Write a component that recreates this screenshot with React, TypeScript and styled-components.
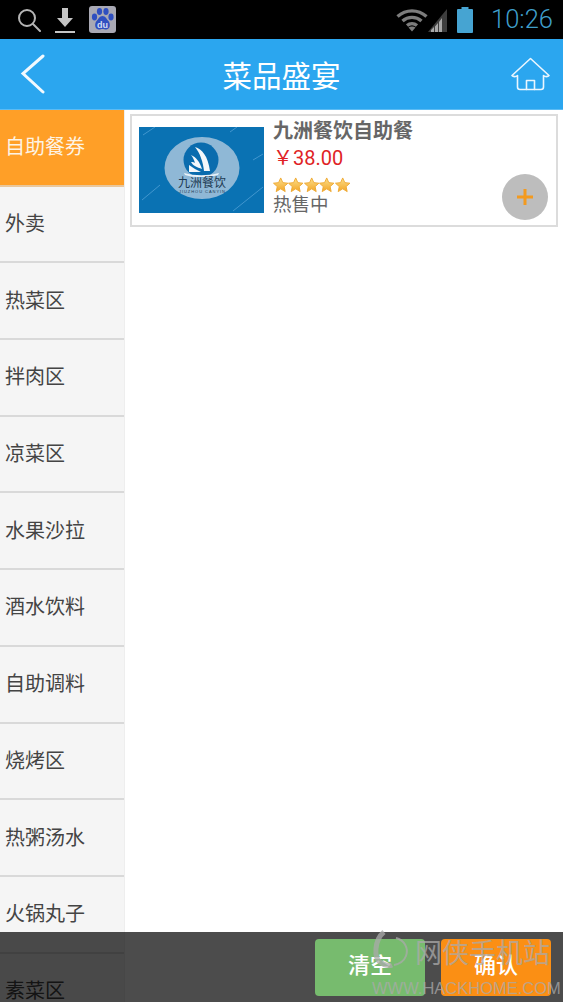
import React from 'react';
import styled, { createGlobalStyle } from 'styled-components';

const CJK = `"Roboto", "Noto Sans CJK SC", sans-serif`;

const categories = ['自助餐券', '外卖', '热菜区', '拌肉区', '凉菜区', '水果沙拉', '酒水饮料', '自助调料', '烧烤区', '热粥汤水', '火锅丸子', '素菜区'];

const Global = createGlobalStyle`
  html, body { margin: 0; padding: 0; background: #fff; }
  * { box-sizing: border-box; }
`;

const Screen = styled.div`
  position: relative;
  width: 563px;
  height: 1002px;
  overflow: hidden;
  display: flex;
  flex-direction: column;
  font-family: ${CJK};
  background: #fff;
`;

const StatusBar = styled.div`
  flex: 0 0 39px;
  background: #000;
  display: flex;
  align-items: center;
  padding: 0 10px 0 17px;
`;
const StatusLeft = styled.div`
  display: flex;
  align-items: center;
  gap: 14px;
`;
const StatusRight = styled.div`
  margin-left: auto;
  display: flex;
  align-items: center;
`;
const Clock = styled.span`
  font-size: 25.5px;
  font-weight: 300;
  color: #3f9fcb;
  margin-left: 18px;
  line-height: 39px;
`;
const BatterySlot = styled.span`
  display: flex;
  margin-left: 10px;
`;

const Header = styled.div`
  flex: 0 0 71px;
  background: #2ba6ef;
  display: flex;
  align-items: center;
  justify-content: space-between;
  padding: 0 13px 0 20px;
  border-bottom: 1px solid #5cbcf4;
`;
const HeaderTitle = styled.h1`
  margin: 0 0 0 6px;
  font-size: 29.5px;
  font-weight: 400;
  color: #fff;
`;

const Body = styled.div`
  flex: 1;
  display: flex;
  min-height: 0;
`;
const Sidebar = styled.div`
  flex: 0 0 125px;
  background: #f5f5f5;
  border-right: 1px solid #eeeeee;
`;
const Category = styled.div<{ $active?: boolean }>`
  height: 76.7px;
  display: flex;
  align-items: center;
  padding: 0 0 3px 5px;
  font-size: 20px;
  color: ${({ $active }) => ($active ? '#fdf3e4' : '#444')};
  background: ${({ $active }) => ($active ? '#ff9f27' : 'transparent')};
  border-bottom: 2px solid ${({ $active }) => ($active ? '#e9c79c' : '#d9d9d9')};
`;

const Content = styled.div`
  flex: 1;
  padding: 4px 5px 0 5px;
`;
const Card = styled.div`
  height: 113px;
  border: 2px solid #dcdcdc;
  display: flex;
  padding: 0 8px 0 7px;
`;
const Thumb = styled.svg`
  flex: 0 0 125px;
  width: 125px;
  height: 86px;
  margin-top: 11px;
`;
const Info = styled.div`
  flex: 1;
  margin-left: 9px;
  padding-top: 1px;
  display: flex;
  flex-direction: column;
`;
const DishName = styled.div`
  font-size: 20px;
  font-weight: 700;
  color: #666;
  line-height: 28px;
`;
const Price = styled.div`
  font-size: 20px;
  color: #e01f26;
  line-height: 26px;
`;
const Stars = styled.div`
  display: flex;
  margin-top: 6px;
  height: 16px;
`;
const Sale = styled.div`
  font-size: 18.5px;
  color: #666;
  line-height: 24px;
`;
const AddButton = styled.div`
  align-self: flex-end;
  flex: 0 0 46px;
  width: 46px;
  height: 46px;
  margin-bottom: 5px;
  border-radius: 50%;
  background: #bdbdbd;
  display: flex;
  align-items: center;
  justify-content: center;
`;

const BottomBar = styled.div`
  position: absolute;
  left: 0;
  right: 0;
  bottom: 0;
  height: 70px;
  background: rgba(0, 0, 0, 0.7);
  display: flex;
  justify-content: flex-end;
  gap: 16px;
  padding: 7px 12px 6px 0;
`;
const ActionButton = styled.div<{ $color: string }>`
  width: 110px;
  padding-bottom: 10px;
  border-radius: 4px;
  background: ${({ $color }) => $color};
  color: #fff;
  font-size: 22px;
  font-weight: 500;
  display: flex;
  align-items: center;
  justify-content: center;
`;

const Watermark = styled.div`
  position: absolute;
  left: 372px;
  top: 930px;
  width: 191px;
  height: 70px;
  pointer-events: none;
  color: rgba(170, 170, 170, 0.76);
`;
const WatermarkSwirl = styled.svg`
  position: absolute;
  left: 0;
  top: 0;
`;
const WatermarkName = styled.div`
  position: absolute;
  left: 43px;
  top: 4px;
  font-size: 27px;
  line-height: 40px;
  white-space: nowrap;
`;
const WatermarkUrl = styled.div`
  position: absolute;
  left: 0;
  top: 47px;
  font-family: "Liberation Sans", sans-serif;
  font-size: 16.5px;
  line-height: 22px;
  white-space: nowrap;
`;

const SearchIcon = () => (
  <svg width="24" height="24" viewBox="0 0 24 24" fill="none" stroke="#b5b5b5" strokeWidth="2">
    <circle cx="10" cy="10" r="8" />
    <path d="M16 16l7 7" strokeLinecap="round" />
  </svg>
);

const DownloadIcon = () => (
  <svg width="20" height="28" viewBox="0 0 20 28" fill="#c4c4c4">
    <path d="M7 2h6v10h5l-8 9-8-9h5z" />
    <rect x="0" y="25" width="20" height="2" />
  </svg>
);

const BaiduIcon = () => (
  <svg width="27" height="27" viewBox="0 0 27 27">
    <rect width="27" height="27" rx="3" fill="#a9a9b4" />
    <g fill="#2f4fc0">
      <ellipse cx="5.5" cy="11" rx="2.6" ry="3.4" />
      <ellipse cx="10.5" cy="5.5" rx="2.6" ry="3.4" />
      <ellipse cx="17" cy="5.5" rx="2.6" ry="3.4" />
      <ellipse cx="22" cy="11" rx="2.6" ry="3.4" />
      <path d="M13.5 10c3 0 4 3 6 5 2 2.500 2 8-2 8.500-1.500.2-2.500-.6-4-.6s-2.500.8-4 .6c-4-.5-4-6-2-8.500 2-2 3-5 6-5z" />
    </g>
    <text x="13.500" y="21.500" textAnchor="middle" fontSize="9" fontWeight="700" fill="#d5dcf2" fontFamily="Liberation Sans, sans-serif">du</text>
  </svg>
);

const WifiIcon = () => (
  <svg width="32" height="24" viewBox="0 0 32 24" fill="none" stroke="#7d7d7d" strokeWidth="3.400">
    <path d="M1.500 8.500C10 1 22 1 30.500 8.500" />
    <path d="M6.500 13C12 8.200 20 8.200 25.500 13" />
    <path d="M11 17.500c3-2.500 7-2.500 10 0" />
    <path d="M16 23.500l-3.500-4c2-1.300 5-1.300 7 0z" fill="#7d7d7d" stroke="none" />
  </svg>
);

const SignalIcon = () => (
  <svg width="19" height="24" viewBox="0 0 19 24">
    <path d="M19 1v23H0z" fill="#3e3e3e" />
    <path d="M3 24h3v-5l-3 3zM7 24h3v-9l-3 3.500zM11 24h3v-14l-3 4z" fill="#a8a8a8" />
  </svg>
);

const BatteryIcon = () => (
  <svg width="16" height="26" viewBox="0 0 16 26" fill="#46a4d2">
    <rect x="4.500" y="0" width="7" height="3" />
    <rect x="0" y="2" width="16" height="24" rx="1" />
  </svg>
);

const BackIcon = () => (
  <svg width="26" height="40" viewBox="0 0 26 40" fill="none" stroke="#f2f9fe" strokeWidth="3" strokeLinecap="round">
    <path d="M23 2L3 19.500 23 38" />
  </svg>
);

const HomeIcon = () => (
  <svg width="39" height="34" viewBox="0 0 39 34" fill="none" stroke="#eaf6fe" strokeWidth="1.600" strokeLinejoin="round" strokeLinecap="round">
    <path d="M19.500 1.500L1 18.500c1 1.500 4 1.500 5.500 0V30c0 1.500 1 2.500 2.500 2.500h21c1.500 0 2.500-1 2.500-2.500V18.500c1.500 1.500 4.500 1.500 5.500 0z" />
    <path d="M15.500 32.500V23.500h8V32.500" />
  </svg>
);

const Star = () => (
  <svg width="15.400" height="16" viewBox="0 0 24 24">
    <path d="M12 1l3.300 7.300 7.900.9-5.900 5.300 1.700 7.800L12 18l-7 4.300 1.700-7.800L.8 9.200l7.900-.9z" fill="url(#starFill)" stroke="#eeaa33" strokeWidth="1.500" strokeLinejoin="round" />
  </svg>
);

const StarGradient = () => (
  <svg width="0" height="0">
    <defs>
      <linearGradient id="starFill" x1="0" y1="0" x2="0" y2="1">
        <stop offset="0" stopColor="#fbe08c" />
        <stop offset="1" stopColor="#f3a526" />
      </linearGradient>
    </defs>
  </svg>
);

const PlusIcon = () => (
  <svg width="16" height="16" viewBox="0 0 16 16" fill="#f39a1f">
    <rect x="6.500" y="0" width="3" height="16" />
    <rect x="0" y="6.500" width="16" height="3" />
  </svg>
);

const DishLogo = () => (
  <Thumb viewBox="0 0 125 86">
    <rect width="125" height="86" fill="#0a72b3" />
    <g stroke="#5aa6da" strokeWidth="0.700">
      <path d="M4 8L16 0M91 5L98 0M114 33L124 27M3 73L21 58M94 84L124 60" />
    </g>
    <ellipse cx="63" cy="41" rx="37.500" ry="31" fill="#8fb8d6" />
    <circle cx="62" cy="33" r="17.500" fill="#0a6cae" />
    <g fill="#f4f8fb">
      <path d="M56 20C63 22 69 29 71 44L65 44C64 35 61 26 56 20z" />
      <path d="M52 28C57 30 61 35 63 42C58 40 54 39 52 35C54 35 55 35 56 36C55 33 54 30 52 28z" />
      <path d="M50 38C54 41 58 43 62 45L50 45z" />
    </g>
    <path d="M45 46c11 3 24 3 35 0l-1 2c-11 3-23 3-33 0z" fill="#e8f1f8" />
    <text x="63" y="60" textAnchor="middle" fontSize="12" fill="#1d3a52" fontFamily="Noto Sans CJK SC, sans-serif">九洲餐饮</text>
    <text x="63" y="66" textAnchor="middle" fontSize="4" fill="#1d3a52" fontFamily="Liberation Sans, sans-serif" textLength="46">JIUZHOU CANYIN</text>
  </Thumb>
);

export default function App() {
  return (
    <Screen>
      <Global />
      <StarGradient />
      <StatusBar>
        <StatusLeft>
          <SearchIcon />
          <DownloadIcon />
          <BaiduIcon />
        </StatusLeft>
        <StatusRight>
          <WifiIcon />
          <SignalIcon />
          <BatterySlot><BatteryIcon /></BatterySlot>
          <Clock>10:26</Clock>
        </StatusRight>
      </StatusBar>
      <Header>
        <BackIcon />
        <HeaderTitle>菜品盛宴</HeaderTitle>
        <HomeIcon />
      </Header>
      <Body>
        <Sidebar>
          {categories.map((name, i) => (
            <Category key={name} $active={i === 0}>{name}</Category>
          ))}
        </Sidebar>
        <Content>
          <Card>
            <DishLogo />
            <Info>
              <DishName>九洲餐饮自助餐</DishName>
              <Price>￥38.00</Price>
              <Stars>
                {[0, 1, 2, 3, 4].map((n) => <Star key={n} />)}
              </Stars>
              <Sale>热售中</Sale>
            </Info>
            <AddButton><PlusIcon /></AddButton>
          </Card>
        </Content>
      </Body>
      <BottomBar>
        <ActionButton $color="#77bb6e">清空</ActionButton>
        <ActionButton $color="#fb8f14">确认</ActionButton>
      </BottomBar>
      <Watermark>
        <WatermarkSwirl width="40" height="46" viewBox="0 0 40 46" fill="none" stroke="currentColor">
          <path d="M12 2C2 10 2 28 8 32C13 36 18 36 20 35" strokeWidth="5" />
          <path d="M24 8C32 10 37 18 34 26C32 31 27 34 22 35" strokeWidth="2" />
        </WatermarkSwirl>
        <WatermarkName>网侠手机站</WatermarkName>
        <WatermarkUrl>WWW.HACKHOME.COM</WatermarkUrl>
      </Watermark>
    </Screen>
  );
}
